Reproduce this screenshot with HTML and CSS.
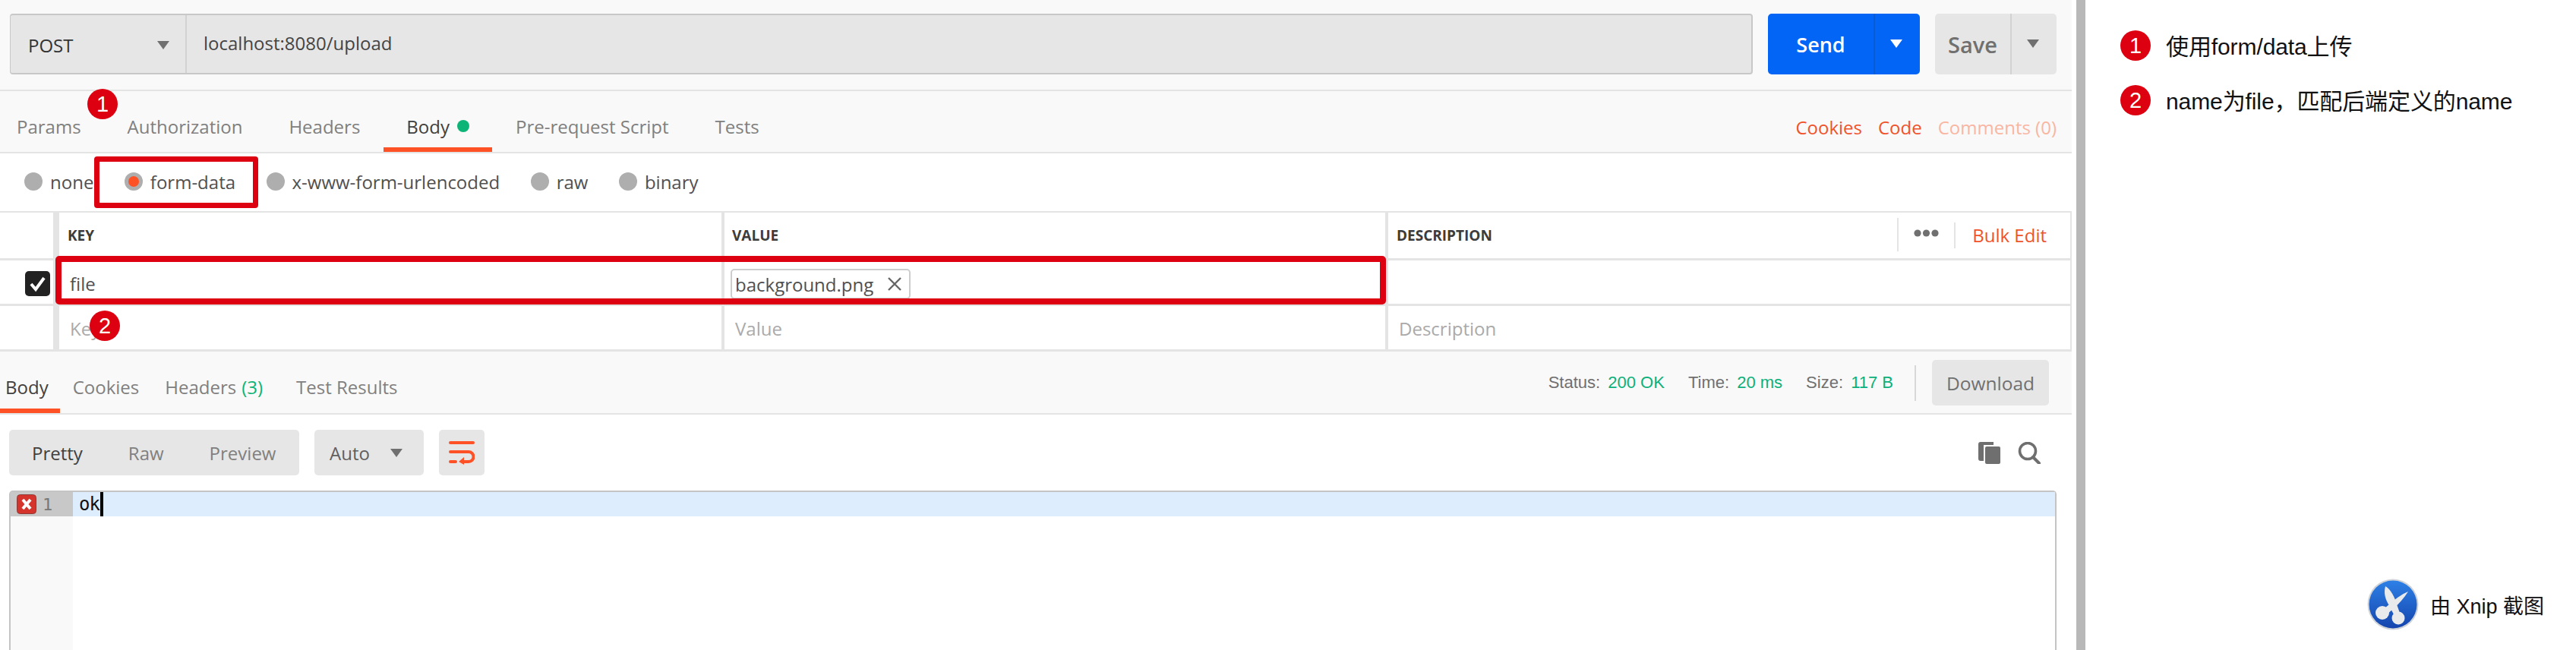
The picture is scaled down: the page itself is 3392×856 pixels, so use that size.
FILE: index.html
```html
<!DOCTYPE html>
<html lang="zh-CN">
<head>
<meta charset="utf-8">
<title>Postman upload</title>
<link rel="stylesheet" href="styles.css">
</head>
<body>
<div class="page">
  <main class="app">
    <section class="request-bar">
      <div class="url-box">
        <div class="method"><span>POST</span><i class="caret caret-gray"></i></div>
        <div class="url">localhost:8080/upload</div>
      </div>
      <div class="split-btn send"><span class="split-main">Send</span><span class="split-arrow"><i class="caret caret-white"></i></span></div>
      <div class="split-btn save"><span class="split-main">Save</span><span class="split-arrow"><i class="caret caret-gray"></i></span></div>
    </section>

    <nav class="req-tabs">
      <span class="tab">Params</span>
      <span class="tab">Authorization</span>
      <span class="tab">Headers</span>
      <span class="tab active">Body<i class="dot"></i></span>
      <span class="tab">Pre-request Script</span>
      <span class="tab">Tests</span>
      <div class="links"><span>Cookies</span><span>Code</span><span class="faded">Comments (0)</span></div>
    </nav>

    <div class="radios">
      <label class="radio"><i class="circle"></i>none</label>
      <label class="radio"><i class="circle on"></i>form-data</label>
      <label class="radio"><i class="circle"></i>x-www-form-urlencoded</label>
      <label class="radio"><i class="circle"></i>raw</label>
      <label class="radio"><i class="circle"></i>binary</label>
    </div>

    <div class="kv">
      <div class="kv-row kv-head">
        <div class="c0"></div>
        <div class="c1">KEY</div>
        <div class="c2">VALUE</div>
        <div class="c3 head-desc">
          <span>DESCRIPTION</span>
          <div class="head-tools">
            <svg class="dots" width="33" height="10" viewBox="0 0 33 10"><circle cx="5" cy="5" r="4.6"/><circle cx="16.5" cy="5" r="4.6"/><circle cx="28" cy="5" r="4.6"/></svg>
            <span class="bulk">Bulk Edit</span>
          </div>
        </div>
      </div>
      <div class="kv-row">
        <div class="c0"><span class="check"><svg width="25" height="25" viewBox="0 0 25 25"><path d="M4 13 L10 20 L21 5" fill="none" stroke="#fff" stroke-width="4"/></svg></span></div>
        <div class="c1 cell">file</div>
        <div class="c2 cell"><span class="chip">background.png<svg width="20" height="18" viewBox="0 0 20 18"><path d="M2 1 L18 17 M18 1 L2 17" stroke="#666" stroke-width="2.4"/></svg></span></div>
        <div class="c3 cell"></div>
      </div>
      <div class="kv-row">
        <div class="c0"></div>
        <div class="c1 cell ph">Key</div>
        <div class="c2 cell ph">Value</div>
        <div class="c3 cell ph">Description</div>
      </div>
    </div>

    <section class="res-bar">
      <span class="rtab active">Body</span>
      <span class="rtab">Cookies</span>
      <span class="rtab">Headers <em>(3)</em></span>
      <span class="rtab">Test Results</span>
      <div class="stats">
        <span class="stat">Status: <b>200 OK</b></span>
        <span class="stat">Time: <b>20 ms</b></span>
        <span class="stat">Size: <b>117 B</b></span>
        <i class="sep"></i>
        <span class="download">Download</span>
      </div>
    </section>

    <div class="toolbar">
      <div class="seg"><span class="on">Pretty</span><span>Raw</span><span>Preview</span></div>
      <div class="auto"><span>Auto</span><i class="caret caret-gray"></i></div>
      <div class="wrap">
        <svg width="34" height="32" viewBox="0 0 34 32"><g fill="none" stroke="#ff5126" stroke-width="4" stroke-linecap="round"><path d="M2 3 H32"/><path d="M2 15 H26 A6.5 6.5 0 0 1 26 28 H19"/><path d="M2 28 H9"/></g><path d="M20 22 V32 L13 28 Z" fill="#ff5126"/></svg>
      </div>
      <div class="tools">
        <svg width="30" height="29" viewBox="0 0 30 29"><path d="M3 0 H20 V4 H7 V25 H3 Q0 25 0 22 V3 Q0 0 3 0 Z" fill="#6f6f6f"/><rect x="9" y="6" width="20" height="23" rx="2" fill="#6f6f6f"/></svg>
        <svg width="30" height="29" viewBox="0 0 30 29"><circle cx="13" cy="12" r="10.5" fill="none" stroke="#6f6f6f" stroke-width="3.6"/><path d="M20 20 L28 28" stroke="#6f6f6f" stroke-width="4" stroke-linecap="round"/></svg>
      </div>
    </div>

    <div class="editor">
      <div class="gutter">
        <div class="gutter-line">
          <svg width="26" height="26" viewBox="0 0 26 26"><rect x="0.5" y="0.5" width="25" height="25" rx="4" fill="#d4342c" stroke="#8f3a34"/><path d="M8 7 L18 19 M18 7 L8 19" stroke="#fff" stroke-width="4"/></svg>
          <span>1</span>
        </div>
      </div>
      <div class="code"><div class="code-line">ok<i class="cursor"></i></div></div>
    </div>

    <div class="mark mark-form"></div>
    <div class="mark mark-row"></div>
    <span class="badge badge-1">1</span>
    <span class="badge badge-2">2</span>
  </main>

  <div class="gap-strip"></div>
  <div class="divider"></div>

  <aside class="notes">
    <div class="note"><span class="num">1</span><span class="note-text">使用form/data上传</span></div>
    <div class="note"><span class="num">2</span><span class="note-text">name为file，匹配后端定义的name</span></div>
    <div class="xnip">
      <svg width="72" height="72" viewBox="0 0 72 72">
        <defs><linearGradient id="xg" x1="0" y1="0" x2="0" y2="1"><stop offset="0" stop-color="#2d80e6"/><stop offset="1" stop-color="#1445ad"/></linearGradient></defs>
        <circle cx="36" cy="36" r="33.5" fill="#cfd3d8"/>
        <circle cx="36" cy="36" r="31.5" fill="url(#xg)"/>
        <g fill="#e9eaec">
          <path d="M26 12 C33 16 38 26 41 36 L46 50 L38 51 L29 34 C25 27 24 19 26 12 Z"/>
          <path d="M56 19 C51 27 44 35 37 41 L26 51 L20 45 L31 36 C38 29 47 23 56 19 Z"/>
          <circle cx="22" cy="47" r="9"/>
          <circle cx="43" cy="54" r="8.5"/>
        </g>
      </svg>
      <span>由 Xnip 截图</span>
    </div>
  </aside>
</div>
</body>
</html>
```

FILE: styles.css
```css
* { box-sizing: border-box; }
html, body { margin: 0; padding: 0; background: #fff; }
body { width: 3392px; height: 856px; overflow: hidden; font-family: "Open Sans", "Noto Sans CJK SC", sans-serif; font-size: 24px; color: #808080; }
i, em { font-style: normal; }

.page { display: flex; height: 856px; }
.app { position: relative; width: 2728px; flex: none; height: 856px; overflow: hidden; }
.gap-strip { width: 6px; flex: none; }
.divider { width: 12px; flex: none; background: #b8b8b8; }

.caret { display: block; width: 0; height: 0; border-left: 8px solid transparent; border-right: 8px solid transparent; border-top: 11px solid #707070; }
.caret-white { border-top-color: #fff; }

.request-bar { display: flex; gap: 20px; height: 120px; padding: 18px 20px 0 13px; background: #f9f9f9; border-bottom: 2px solid #e4e4e4; }
.url-box { flex: 1; display: flex; height: 80px; background: #e6e6e6; border: solid #c8c8c8; border-width: 2px 2px 2px 1px; border-radius: 4px; }
.method { width: 232px; display: flex; align-items: center; justify-content: space-between; padding: 3px 21px 0 23px; border-right: 2px solid #d2d2d2; color: #333; }
.url { padding: 0 0 0 22px; line-height: 74px; color: #444; }

.split-btn { display: flex; height: 80px; border-radius: 5px; font-size: 27px; font-weight: 600; }
.split-main { display: flex; align-items: center; justify-content: center; }
.split-arrow { display: flex; align-items: center; justify-content: center; border-left: 2px solid; padding: 0 3px 2px 0; }
.send { width: 200px; background: #0265f5; color: #fff; }
.send .split-main { width: 139px; }
.send .split-arrow { flex: 1; border-left-color: #0a5ad2; }
.save { width: 160px; background: #e6e6e6; color: #707070; font-size: 29px; }
.save .split-main { width: 99px; }
.save .split-arrow { flex: 1; border-left-color: #d2d2d2; }

.req-tabs { display: flex; height: 82px; background: #f9f9f9; border-bottom: 2px solid #e4e4e4; }
.tab { display: flex; align-items: center; height: 80px; padding: 18px 30.5px 0; border-bottom: 6px solid transparent; }
.tab:first-child { padding-left: 22px; }
.tab.active { color: #404040; border-bottom-color: #ff5126; }
.dot { width: 16px; height: 16px; margin-left: 10px; border-radius: 50%; background: #0cb577; }
.links { margin-left: auto; display: flex; gap: 21px; padding: 16px 20px 0 0; line-height: 64px; color: #f0532a; }
.faded { color: #f9b6a2; }

.radios { display: flex; align-items: center; gap: 40.5px; height: 78px; padding: 0 0 2px 32px; border-bottom: 2px solid #e4e4e4; }
.radio { display: flex; align-items: center; gap: 10px; color: #505050; }
.circle { width: 24px; height: 24px; border-radius: 50%; background: #aeaeae; display: flex; align-items: center; justify-content: center; }
.circle.on::after { content: ""; width: 14px; height: 14px; border-radius: 50%; background: #ff5126; }

.kv { border-right: 2px solid #e4e4e4; }
.kv-row { display: grid; grid-template-columns: 78px 876px 874px 1fr; height: 60px; border-bottom: 3px solid #e4e4e4; }
.kv-head { height: 63px; color: #3c3c3c; font-size: 19px; font-weight: 700; line-height: 60px; }
.c0 { border-right: 8px solid #e4e4e4; display: flex; align-items: center; justify-content: flex-end; padding-right: 4px; }
.c1 { padding-left: 11px; border-right: 4px solid #e4e4e4; }
.c2 { padding-left: 10px; border-right: 4px solid #e4e4e4; }
.c3 { padding-left: 11px; }
.head-desc { display: flex; justify-content: space-between; padding-right: 31px; }
.head-tools { display: flex; align-items: center; height: 60px; }
.dots { fill: #707070; margin-right: 20px; margin-top: -6px; }
.bulk { color: #f0532a; font-weight: 400; font-size: 24px; padding-left: 22px; border-left: 2px solid #e4e4e4; line-height: 34px; }
.head-tools::before { content: ""; width: 2px; height: 44px; background: #e4e4e4; margin-right: 20px; margin-top: -2px; }
.check { display: flex; align-items: center; justify-content: center; width: 33px; height: 33px; margin-top: 4px; border-radius: 5px; background: #222; }
.cell { display: flex; align-items: center; padding-top: 2px; color: #505050; }
.c1.cell { padding-left: 14px; }
.c2.cell { padding-left: 14px; }
.c3.cell { padding-left: 14px; }
.kv-row:nth-child(2) .c2.cell { padding-left: 8px; padding-top: 5px; }
.kv-row:nth-child(2) .c1.cell { padding-top: 4px; }
.kv-row:nth-child(3) .cell { color: #aaa; }
.chip { display: flex; align-items: center; gap: 18px; height: 40px; padding: 0 9px 0 4px; border: 2px solid #cdcdcd; border-radius: 5px; color: #505050; }

.res-bar { display: flex; height: 83px; background: #f9f9f9; border-bottom: 2px solid #e4e4e4; }
.rtab { height: 81px; padding: 18px 17px 0; display: flex; align-items: center; gap: 7px; border-bottom: 6px solid transparent; }
.rtab:first-child { padding: 18px 15px 0 7px; }
.rtab:last-of-type { margin-left: 10px; }
.rtab.active { color: #404040; border-bottom-color: #ff5126; }
.rtab em { color: #0cb577; }
.stats { margin-left: auto; display: flex; align-items: center; padding: 1px 30px 0 0; font-family: "Liberation Sans", sans-serif; font-size: 22px; color: #707070; }
.stat { padding-right: 31px; }
.stat b { font-weight: 400; color: #0cb07a; margin-left: 4px; }
.sep { width: 2px; height: 47px; margin: 0 21px 0 -3px; background: #d8d8d8; }
.download { display: flex; align-items: center; justify-content: center; width: 154px; height: 60px; border-radius: 5px; background: #e6e6e6; font-family: "Open Sans", sans-serif; font-size: 24.5px; color: #707070; }

.toolbar { display: flex; align-items: center; height: 60px; margin: 20px 41px 20px 12px; gap: 20px; }
.seg { display: flex; align-items: center; gap: 60px; width: 382px; height: 60px; padding: 0 30px; border-radius: 5px; background: #e6e6e6; }
.seg .on { color: #404040; }
.auto { display: flex; align-items: center; justify-content: space-between; width: 144px; height: 60px; padding: 0 28px 0 20px; border-radius: 5px; background: #e6e6e6; color: #606060; }
.wrap { display: flex; align-items: center; justify-content: center; width: 60px; height: 60px; border-radius: 5px; background: #e6e6e6; }
.tools { margin-left: auto; display: flex; gap: 22px; }

.editor { display: flex; height: 210px; margin: 0 20px 0 12px; border: solid #c4c4c4; border-width: 2px 2px 0; border-radius: 5px 5px 0 0; font-family: "DejaVu Sans Mono", monospace; font-size: 22px; }
.gutter { width: 82px; background: #f9f9f9; }
.gutter-line { display: flex; align-items: center; gap: 8px; height: 32px; padding-left: 8px; background: #c8c8c8; color: #777; }
.code { flex: 1; }
.code-line { display: flex; height: 32px; padding-left: 8px; font-size: 24px; letter-spacing: -1px; line-height: 32px; color: #111; background: #deedfd; }
.cursor { width: 4px; height: 32px; margin-left: 1px; background: #000; }

.mark { position: absolute; border: solid #dc0011; }
.mark-form { left: 124px; top: 206px; width: 216px; height: 68px; border-width: 7px; border-radius: 4px; }
.mark-row { left: 73px; top: 337px; width: 1752px; height: 64px; border-width: 8px; border-radius: 5px; }
.badge, .num { display: flex; align-items: center; justify-content: center; width: 40px; height: 40px; border-radius: 50%; background: #dc0011; color: #fff; font-family: "Liberation Sans", sans-serif; font-size: 29px; }
.badge { position: absolute; }
.badge-1 { left: 115px; top: 117px; }
.badge-2 { left: 118px; top: 409px; }

.notes { flex: 1; display: flex; flex-direction: column; padding: 40px 0 24px 46px; font-family: "Liberation Sans", "Noto Sans CJK SC", sans-serif; font-size: 30px; color: #111; }
.note { display: flex; align-items: center; gap: 20px; height: 40px; margin-bottom: 32px; }
.note-text { padding-bottom: 2px; letter-spacing: -0.1px; }
.num { flex: none; }
.xnip { margin-top: auto; margin-right: 42px; display: flex; align-items: center; justify-content: flex-end; gap: 13px; font-size: 27px; }
```
